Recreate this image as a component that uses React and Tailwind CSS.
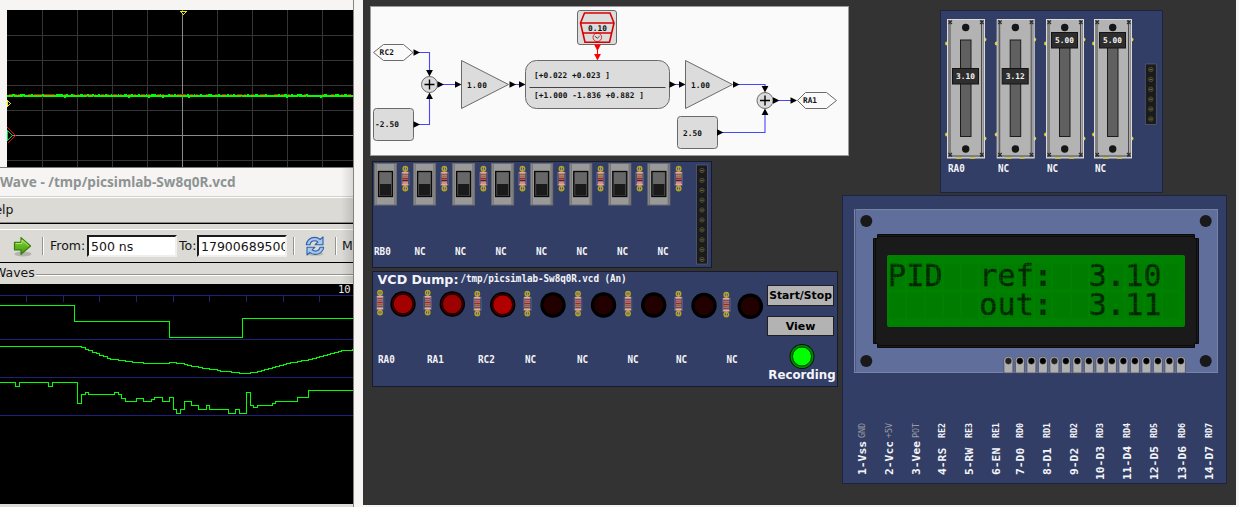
import React from "react";

const MONO = "font-['DejaVu_Sans_Mono',monospace]";
const LABEL = "font-['DejaVu_Sans_Mono',monospace] font-bold text-[9.3px] leading-[10px] whitespace-pre text-[#f4f4f8]";

/* Turns [x, level] pairs into a square-edged trace; units are thirds of a pixel. */
function steps(data, offset, end) {
  const px = (v) => Math.floor(v / 3) + 0.5;
  let d = "";
  data.forEach(([x, y], i) => {
    const yy = px(y) + offset;
    d += i === 0 ? `M0 ${yy}` : `H${px(x)}V${yy}`;
  });
  return d + `H${end}`;
}

const ANALOG_1 = [[0, 49], [245, 52], [257, 58], [266, 61], [278, 67], [290, 70], [299, 76], [311, 79], [323, 85], [332, 88], [356, 91], [377, 94], [398, 97], [431, 100], [509, 97], [530, 100], [554, 103], [563, 106], [575, 109], [596, 112], [608, 115], [629, 118], [653, 121], [662, 124], [695, 127], [719, 130], [752, 127], [773, 124], [785, 121], [794, 118], [806, 115], [818, 112], [827, 109], [839, 106], [851, 103], [860, 100], [872, 97], [893, 94], [905, 91], [926, 88], [938, 85], [950, 82], [959, 79], [971, 76], [983, 73], [992, 70], [1004, 67], [1016, 64], [1025, 61], [1057, 58]];
const ANALOG_2 = [[0, 157], [47, 169], [59, 157], [146, 169], [158, 157], [233, 220], [245, 193], [257, 187], [266, 193], [344, 187], [356, 193], [365, 205], [377, 214], [410, 205], [431, 214], [455, 208], [464, 202], [488, 214], [509, 202], [521, 238], [530, 250], [542, 238], [554, 214], [575, 226], [596, 238], [620, 226], [629, 238], [686, 250], [707, 238], [719, 250], [740, 187], [752, 226], [761, 232], [773, 226], [818, 220], [827, 214], [893, 202], [926, 181]];

const RED_NOISE = [[9, 4], [14, 3], [18, 2], [28, 3], [34, 8], [44, 11], [64, 2], [73, 2], [77, 2], [84, 3], [89, 4], [95, 1], [101, 3], [107, 2], [113, 4], [120, 2], [128, 3], [134, 2], [141, 4], [148, 2], [157, 3], [162, 2], [170, 3], [177, 9], [190, 3], [196, 2], [206, 3], [215, 2], [222, 4], [230, 2], [237, 5], [244, 2], [251, 3], [260, 5], [274, 4], [281, 3], [288, 2], [299, 2], [304, 2], [322, 2], [331, 3], [341, 2], [348, 3]];
const GREEN_NOISE = [[12, 3], [20, 5], [31, 2], [42, 2], [56, 7], [66, 2], [71, 2], [80, 3], [87, 2], [92, 2], [98, 2], [105, 2], [111, 1], [118, 1], [124, 3], [131, 2], [138, 2], [146, 1], [151, 5], [160, 1], [168, 2], [174, 2], [187, 2], [194, 1], [200, 2], [208, 4], [218, 2], [227, 2], [233, 2], [247, 2], [255, 3], [265, 2], [278, 2], [284, 3], [291, 2], [297, 5], [306, 2], [324, 3], [335, 4], [344, 3]];

function Scope() {
  return (
    <svg className="ml-[7px] mt-[10px] block h-[157px] w-[346px]" viewBox="7 10 346 157" shapeRendering="crispEdges">
      <rect x="7" y="10" width="346" height="157" fill="#000" />
      {[42, 77, 112, 147, 217, 252, 287, 322].map((x) => <rect key={x} x={x} y="10" width="1" height="157" fill="#343434" />)}
      {[35, 60, 85, 110, 160].map((y) => <rect key={y} x="7" y={y} width="346" height="1" fill="#343434" />)}
      <rect x="182" y="10" width="1" height="157" fill="#8a8a8a" />
      <rect x="7" y="135" width="346" height="1" fill="#8a8a8a" />
      {RED_NOISE.map(([x, w]) => <rect key={x} x={x} y="94" width={w} height="1" fill="#f00" />)}
      {GREEN_NOISE.map(([x, w]) => <rect key={x} x={x} y="94" width={w} height="1" fill="#0f0" />)}
      <rect x="7" y="95" width="346" height="2" fill="#0f0" />
      {[64, 128, 148, 162, 188, 286, 320].map((x) => <rect key={x} x={x} y="97" width="2" height="1" fill="#0f0" />)}
      {[13, 23, 42, 87, 93, 241, 298, 306].map((x) => <rect key={x} x={x} y="96" width="1" height="1" fill="#c03000" />)}
      <path d="M180.5 11.5h6l-3 3z" fill="#000" stroke="#eeee00" />
      <path d="M7.5 100.5l3 3l-3 3z" fill="#000" stroke="#eeee00" />
      <path d="M7.5 127.5l8 8l-8 8" fill="none" stroke="#f00" />
      <path d="M7.5 130.5l5 5l-5 5z" fill="#000" stroke="#00e040" />
    </svg>
  );
}

function ArrowIcon() {
  return (
    <svg className="h-[22px] w-[20px] shrink-0" viewBox="0 0 20 22">
      <defs>
        <linearGradient id="ga" x1="0" y1="0" x2="0" y2="1"><stop offset="0" stopColor="#8fe04a" /><stop offset=".5" stopColor="#62b822" /><stop offset="1" stopColor="#4a9a10" /></linearGradient>
      </defs>
      <ellipse cx="10" cy="18" rx="8.5" ry="2.6" fill="#000" opacity=".18" />
      <path d="M1.5 6.300H8V1.600L17.500 10L8 18.300V13.800H1.500Z" fill="url(#ga)" stroke="#3a7d0a" strokeWidth="1.200" strokeLinejoin="round" />
      <path d="M2.600 7.400H9V4L15.800 10" fill="none" stroke="#b4f07c" strokeWidth=".9" />
    </svg>
  );
}

function RefreshIcon() {
  return (
    <svg className="h-[20px] w-[20px] shrink-0" viewBox="0 0 20 20">
      <ellipse cx="10" cy="18" rx="8.5" ry="1.8" fill="#000" opacity=".15" />
      <g fill="#a9c8ee" stroke="#2d62a8" strokeWidth="1.1" strokeLinejoin="round">
        <path d="M1.3 8.8C1.7 4.6 5.2 1.4 9.6 1.4C11.8 1.4 13.7 2.2 15.2 3.5L18 .9V8.8H10L12.8 6C12 5.2 10.9 4.8 9.6 4.8C7.3 4.8 5.4 6.4 5 8.8Z" />
        <path d="M18.7 11.2C18.3 15.4 14.8 18.4 10.4 18.4C8.2 18.4 6.3 17.7 4.8 16.4L2 19V11.2H10L7.2 13.9C8 14.7 9.1 15.1 10.4 15.1C12.7 15.1 14.6 13.6 15 11.2Z" />
      </g>
    </svg>
  );
}

function Sep() {
  return <div className="h-[18px] w-[2px] shrink-0 border-l border-[#96948f] bg-white" />;
}

function Entry({ children }) {
  return (
    <div className="h-[22px] w-[90px] shrink-0 overflow-hidden border-2 border-t-[#1c1c1c] border-l-[#1c1c1c] border-r-[#f0efec] border-b-[#f0efec] bg-white pl-[2px] text-[12.5px] leading-[19px] whitespace-nowrap">
      {children}
    </div>
  );
}

function WaveWindow() {
  return (
    <div className="relative flex h-[340px] flex-col border-t border-[#7c7a77] bg-[#dddbd7] font-['DejaVu_Sans',sans-serif] text-[12.5px] text-[#151515]">
      <div className="h-[28px] bg-[#f6f5f4] font-['Noto_Sans',sans-serif] text-[13.6px] leading-[28px] font-bold whitespace-nowrap text-[#8e9393]">
        Wave - /tmp/picsimlab-Sw8q0R.vcd
      </div>
      <div className="h-[2px] border-t border-[#d2d0cc] bg-white" />
      <div className="flex h-[25px] items-center border-b border-[#8a8884] bg-[#dbdad5]">
        <div className="-ml-[15px] whitespace-nowrap">Help</div>
      </div>
      <div className="h-[6px] border-t border-black bg-[#dbdad5]" />
      <div className="flex h-[33px] items-center border-t border-white bg-[#dbdad5]">
        <div className="ml-[13px] pt-[2px]"><ArrowIcon /></div>
        <div className="ml-[9px]"><Sep /></div>
        <div className="ml-[6px] w-[37px] whitespace-nowrap">From:</div>
        <Entry>500 ns</Entry>
        <div className="ml-[2px] w-[18px] whitespace-nowrap">To:</div>
        <Entry>17900689500</Entry>
        <div className="ml-[6px]"><Sep /></div>
        <div className="ml-[10px]"><RefreshIcon /></div>
        <div className="ml-[10px]"><Sep /></div>
        <div className="ml-[5px] w-[11px] overflow-hidden">M</div>
      </div>
      <div className="flex h-[22px] items-center overflow-hidden border-t border-black bg-[#dbdad5]">
        <div className="-ml-[6px] shrink-0 whitespace-nowrap">Waves</div>
        <div className="mt-[2px] ml-[1px] h-[2px] flex-1 border-t border-[#96948f] bg-white" />
      </div>
      <svg className="block h-[220px] w-[353px]" viewBox="0 284 353 220" shapeRendering="crispEdges">
        <rect x="0" y="284" width="353" height="220" fill="#000" />
        {[295, 339, 377, 415].map((y) => <rect key={y} x="0" y={y} width="353" height="1" fill="#20207c" />)}
        {[26, 63, 99, 136, 173, 209, 246, 283, 319].map((x) => <rect key={x} x={x} y="296" width="1" height="6" fill="#20207c" />)}
        <text x="338" y="293" fontSize="10.5" fill="#e8e8e8" fontFamily="DejaVu Sans Mono, monospace">10</text>
        <g fill="none" stroke="#0f0">
          <path d="M0 305.500H74.500V321.500H169.500V337.500H242.500V318.500H353" />
          <path d={steps(ANALOG_1, 330, 353)} />
          <path d={steps(ANALOG_2, 330, 353)} />
        </g>
      </svg>
      <div className="pointer-events-none absolute top-0 right-0 h-[115px] w-[12px] bg-linear-to-r from-transparent to-black/12" />
    </div>
  );
}

function Arrow({ x, y, dir = "r", c = "#000" }) {
  const d = { r: "M0 -3.2L6.5 0L0 3.2Z", d: "M-3.400 0L0 6.500L3.400 0Z", u: "M-3.400 0L0 -6.500L3.400 0Z" }[dir];
  return <path d={d} transform={`translate(${x} ${y})`} fill={c} />;
}

function Diagram() {
  return (
    <svg className="block h-[150px] w-[479px]" viewBox="370 6 479 150">
      <rect x="370.500" y="6.500" width="478" height="149" fill="#fafafa" stroke="#9a9a9a" />
      <g fill="none" stroke="#4646ff" strokeWidth="1.1">
        <path d="M419 52.500H429.500V72M419 124.500H429.500V98M443 84.500H456M515 84.500H520M675 84.500H680M738 84.500H765V87M722 132.500H765V114M779 100.500H791" />
      </g>
      <g fill="#dcdcdc" stroke="#6a6a6a">
        <path d="M373.500 52.500L383.500 44.500H403.500L413 52.500L403.500 60.500H383.500Z" fill="#fafafa" />
        <path d="M797.500 100.500L805.500 92.500H826.500L836.500 100.500L826.500 108.500H805.500Z" fill="#fafafa" />
        <circle cx="429.500" cy="84.500" r="8" />
        <circle cx="765" cy="100.500" r="8" />
        <path d="M461.500 60.500V108.500L508.500 84.500Z" />
        <path d="M685.500 60.500V108.500L732.500 84.500Z" />
        <rect x="525.500" y="60.500" width="144" height="48" rx="11" />
        <rect x="373.500" y="108.500" width="40" height="32" rx="3" />
        <rect x="677.500" y="116.500" width="40" height="32" rx="3" />
        <rect x="577.500" y="10.500" width="39" height="34" rx="2.500" />
      </g>
      <path d="M424.500 84.500H434.500M429.500 79.500V89.500M760 100.500H770M765 95.500V105.500" stroke="#000" strokeWidth="1.400" />
      <path d="M529.500 87.500H665.500" stroke="#444" />
      <Arrow x={413.500} y={52.500} /><Arrow x={413.500} y={124.500} />
      <Arrow x={429.500} y={70} dir="d" /><Arrow x={429.500} y={99} dir="u" />
      <Arrow x={437.500} y={84.500} /><Arrow x={455} y={84.500} />
      <Arrow x={509.500} y={84.500} /><Arrow x={519} y={84.500} />
      <Arrow x={669.500} y={84.500} /><Arrow x={679} y={84.500} />
      <Arrow x={733} y={84.500} /><Arrow x={765} y={86} dir="d" />
      <Arrow x={765} y={115} dir="u" /><Arrow x={717} y={132.500} />
      <Arrow x={773} y={100.500} /><Arrow x={790.500} y={100.500} />
      <Arrow x={597.500} y={44.500} dir="d" c="#f00" /><Arrow x={597.500} y={54} dir="d" c="#f00" />
      <path d="M597.500 48V56" stroke="#f00" />
      <g fill="none" stroke="#d80000" strokeWidth="1.600">
        <path d="M584.500 13H610L614 23L609.500 42.300H585L580.500 23Z" />
        <path d="M581 23H614M583 33H611.500" strokeWidth="1.300" />
        <circle cx="597.300" cy="37.300" r="4.300" strokeWidth=".8" />
      </g>
      <path d="M594.800 36.200L597.300 38.200L599.600 36.200" fill="none" stroke="#222" strokeWidth=".8" />
      <g fontFamily="DejaVu Sans Mono, monospace" fontWeight="bold" fontSize="7.800" fill="#111">
        <text x="379.500" y="55.300" textLength="14.500">RC2</text>
        <text x="803" y="103.300" textLength="14">RA1</text>
        <text x="588" y="31.300" textLength="19">0.10</text>
        <text x="467" y="88.300" textLength="20">1.00</text>
        <text x="691" y="88.300" textLength="19">1.00</text>
        <text x="375" y="127.300" textLength="24">-2.50</text>
        <text x="683" y="136.300" textLength="19">2.50</text>
        <text x="534" y="78" textLength="76">[+0.022 +0.023 ]</text>
        <text x="534" y="98.300" textLength="110">[+1.000 -1.836 +0.882 ]</text>
      </g>
    </svg>
  );
}

function Resistor({ x, y, flip }) {
  const bands = flip
    ? ["#e9a6a2", "#7a5050", "#8a6060", "#b02020", "#7a6a40", "#7a4a4a", "#e9a6a2"]
    : ["#e9a6a2", "#8a6a45", "#8a7a50", "#b02028", "#40282c", "#d08888", "#e9a6a2"];
  return (
    <g transform={`translate(${x} ${y})`}>
      <rect x="-.7" y="1" width="1.400" height="24" fill="#9a9a98" />
      <circle cx="0" cy="2.700" r="2.200" fill="none" stroke="#b3a51e" strokeWidth="1.500" />
      <circle cx="0" cy="22.500" r="2.200" fill="none" stroke="#b3a51e" strokeWidth="1.500" />
      <rect x="-2.800" y="6" width="5.600" height="13.500" fill="#c98f8f" />
      {bands.map((c, i) => <rect key={i} x={i === 0 || i === 6 ? -3.200 : -2.700} y={5.800 + i * 2} width={i === 0 || i === 6 ? 6.400 : 5.400} height="1.500" fill={c} />)}
      <rect x="-4.200" y="6" width=".7" height="14" fill="#6d7796" opacity=".7" />
      <rect x="3.500" y="6" width=".7" height="14" fill="#6d7796" opacity=".7" />
    </g>
  );
}

function Header({ x, y, n, h }) {
  return (
    <g>
      <rect x={x} y={y} width="11" height={h} fill="#1b1b1b" stroke="#59607a" strokeWidth=".7" />
      {Array.from({ length: n }, (_, i) => (
        <g key={i}>
          <circle cx={x + 5.500} cy={y + 5.500 + i * 9.890} r="2.200" fill="none" stroke="#4a4a48" />
          <rect x={x + 4} y={y + 5 + i * 9.890} width="3" height="1.200" fill="#6b6a10" />
        </g>
      ))}
    </g>
  );
}

const SWITCH_LABELS = ["RB0", "NC", "NC", "NC", "NC", "NC", "NC", "NC"];

function SwitchBoard() {
  return (
    <div className="flex h-[107px] w-[340px] border border-[#161b30] bg-[#323e66]">
      <div className="w-[321px]">
        <svg className="block h-[46px] w-[321px]" viewBox="373 162 321 46">
          {SWITCH_LABELS.map((_, i) => {
            const x = 374 + i * 39.050;
            return (
              <g key={i}>
                <rect x={x + 0.500} y="163.500" width="22" height="41.500" fill="#999" stroke="#6c6c70" />
                <rect x={x + 1.500} y="164" width="1.200" height="41" fill="#777" />
                <rect x={x + 20.300} y="164" width="1.200" height="41" fill="#707070" />
                <rect x={x + 4.500} y="171.500" width="14" height="25" fill="#555" stroke="#080808" strokeWidth="1.300" />
                <rect x={x + 5.700} y="172.500" width="11.600" height="11.500" fill="#676767" />
                <rect x={x + 6} y="184" width="11" height="11.500" fill="#1a1a1a" />
                <Resistor x={x + 31.300} y={166} />
              </g>
            );
          })}
        </svg>
        <div className={"flex pt-[39px] pl-[1px] " + LABEL}>
          {SWITCH_LABELS.map((t, i) => <div key={i} className="w-[40.5px] shrink-0 scale-y-[1.14]">{t}</div>)}
        </div>
      </div>
      <svg className="block h-[105px] w-[17px]" viewBox="694 162 17 105">
        <Header x={696.500} y={165} n={10} h={99} />
      </svg>
    </div>
  );
}

const LEDS = [
  [403, 304, "#a40000", "#3c0000"], [452.300, 304, "#9c0000", "#3c0000"], [502.700, 304.700, "#b00000", "#3c0000"],
  [553, 305, "#230000", "#000"], [603.500, 305, "#230000", "#000"], [653.700, 305, "#230000", "#000"],
  [704, 305.500, "#230000", "#000"], [750.300, 306.300, "#230000", "#000"],
];
const DUMP_RES = [[380, 290], [427.700, 290], [477.300, 291], [527.300, 291], [578, 291], [628, 291], [678.500, 291], [726.300, 292]];
const DUMP_LABELS = [["RA0", "w-[49px]"], ["RA1", "w-[51px]"], ["RC2", "w-[47px]"], ["NC", "w-[52px]"], ["NC", "w-[50.5px]"], ["NC", "w-[48.5px]"], ["NC", "w-[50.5px]"], ["NC", "w-[20px]"]];

function DumpBoard() {
  return (
    <div className="flex h-[116px] w-[466px] border border-[#161b30] bg-[#323e66]">
      <div className="w-[394px]">
        <div className="flex h-[15px] items-center pl-[4.5px] whitespace-pre text-[#f4f4f8]">
          <div className="w-[83px] shrink-0 font-['DejaVu_Sans',sans-serif] text-[12.7px] leading-[15px] font-bold">VCD Dump:</div>
          <div className={"scale-y-[1.14] pb-px tracking-[-0.06px] " + LABEL}>/tmp/picsimlab-Sw8q0R.vcd (An)</div>
        </div>
        <svg className="block h-[36px] w-[393px]" viewBox="373 287 393 36">
          {DUMP_RES.map(([x, y]) => <Resistor key={x} x={x} y={y} flip />)}
          {LEDS.map(([x, y, c, ring]) => (
            <g key={x}>
              <circle cx={x} cy={y} r="12.700" fill="#000" />
              <circle cx={x} cy={y} r="11.300" fill={ring} />
              <circle cx={x} cy={y} r="9.800" fill={c} stroke="#000" strokeWidth=".8" />
            </g>
          ))}
        </svg>
        <div className={"flex pt-[31.5px] pl-[5px] " + LABEL}>
          {DUMP_LABELS.map(([t, w], i) => <div key={i} className={w + " shrink-0 scale-y-[1.14]"}>{t}</div>)}
        </div>
      </div>
      <div className="flex flex-1 flex-col items-center pt-[13px] font-['DejaVu_Sans',sans-serif] font-bold">
        <button className="h-[21px] w-[67px] self-start border border-[#202020] bg-[#b3b3b3] text-[10.8px] leading-[18px] whitespace-nowrap text-black"><span className="-mx-2">Start/Stop</span></button>
        <button className="mt-[10px] h-[20px] w-[67px] self-start border border-[#202020] bg-[#b3b3b3] text-[11px] leading-[19px] text-black">View</button>
        <svg className="mt-[7px] block h-[26px] w-[26px] shrink-0" viewBox="-13 -13.500 26 26">
          <circle r="12.500" fill="#001800" />
          <circle r="11.500" fill="#008a00" />
          <circle r="9.500" fill="#0f0" stroke="#003c00" />
        </svg>
        <div className="text-[11.8px] leading-[12px] whitespace-nowrap text-[#f4f4f8]">Recording</div>
      </div>
    </div>
  );
}

const POTS = [[947, 68, "3.10"], [996.700, 68, "3.12"], [1046, 32, "5.00"], [1094, 32, "5.00"]];

function PotBoard() {
  return (
    <div className="flex h-[183px] w-[223px] flex-col border border-[#1c2444] bg-[#323e66]">
      <svg className="block h-[151px] w-[221px]" viewBox="941 11 221 151">
        {POTS.map(([x, ky, v]) => (
          <g key={x} transform={`translate(${x} 0)`}>
            <circle cx="0" cy="43.500" r="2" fill="#d8cc3a" /><circle cx="37.500" cy="39.500" r="2" fill="#d8cc3a" />
            <circle cx="0" cy="134.500" r="2" fill="#d8cc3a" /><circle cx="37.500" cy="138.500" r="2" fill="#d8cc3a" />
            <rect x=".5" y="19.500" width="37" height="138.500" fill="#b3b3b3" stroke="#dadada" />
            <path d="M3 20V157M34.500 20V157M1 156H37" stroke="#4c4c4c" fill="none" />
            <path d="M1.500 20V157M36.300 20V157" stroke="#777" fill="none" strokeWidth=".8" />
            <rect x="9" y="157" width="6" height="2" fill="#c8bf48" /><rect x="23" y="157" width="5" height="2" fill="#c8bf48" />
            <path d="M1.500 20.500L5 24M5 20.500L1.500 24M33 20.500L36.500 24M36.500 20.500L33 24M1.500 153L5 156.500M5 153L1.500 156.500M33 153L36.500 156.500M36.500 153L33 156.500" stroke="#2a2a2a" strokeWidth="1.100" />
            <rect x="13.500" y="40" width="10.500" height="96.500" fill="#606060" stroke="#1c1c1c" />
            <circle cx="18.700" cy="27.500" r="3.700" fill="#161616" />
            <circle cx="18.700" cy="149" r="3.700" fill="#161616" />
            <rect x="5.500" y={ky + 0.500} width="26" height="15.500" fill="#2e2e2e" stroke="#141414" />
            <text x="9" y={ky + 11} textLength="19" fontSize="7.800" fontWeight="bold" fill="#f4f4f4" fontFamily="DejaVu Sans Mono, monospace">{v}</text>
          </g>
        ))}
        <Header x={1145.300} y={64} n={6} h={60.500} />
      </svg>
      <div className={"flex pt-[2px] pl-[7px] " + LABEL}>
        <div className="w-[50px] scale-y-[1.14]">RA0</div><div className="w-[49px] scale-y-[1.14]">NC</div><div className="w-[48px] scale-y-[1.14]">NC</div><div className="scale-y-[1.14]">NC</div>
      </div>
    </div>
  );
}

const LCD_ROWS = ["PID  ref:  3.10 ", "     out:  3.11 "];
const LCD_PINS = [
  ["GND", "1-Vss", "w-[27px]", 1], ["+5V", "2-Vcc", "w-[27px]", 1], ["POT", "3-Vee", "w-[26px]", 1], ["RE2", "4-RS", "w-[27px]"],
  ["RE3", "5-RW", "w-[27px]"], ["RE1", "6-EN", "w-[24px]"], ["RD0", "7-D0", "w-[27px]"], ["RD1", "8-D1", "w-[27px]"],
  ["RD2", "9-D2", "w-[26px]"], ["RD3", "10-D3", "w-[27px]"], ["RD4", "11-D4", "w-[27px]"], ["RD5", "12-D5", "w-[28px]"],
  ["RD6", "13-D6", "w-[27px]"], ["RD7", "14-D7", "w-[14px]"],
];

function LcdBoard() {
  return (
    <div className="flex h-[289px] w-[385px] flex-col border border-[#1c2444] bg-[#323e66]">
      <div className="relative mt-[13px] ml-[11px] h-[165px] w-[365px]">
        <svg className="absolute inset-0 h-[165px] w-[365px]" viewBox="854 209 365 165">
          <rect x="854.500" y="209.500" width="363" height="163" fill="#606e9b" stroke="#7884a6" />
          <path d="M855.500 209V372" stroke="#4c587e" />
          {[[866.300, 221], [1205.700, 221], [866.300, 361], [1205.700, 361]].map(([x, y]) => <circle key={x + "-" + y} cx={x} cy={y} r="6" fill="#191919" />)}
          <path d="M877.500 234.500H1194.500V238.500H1198.500V343.500H1194.500V347.500H877.500V343.500H873.500V238.500H877.500Z" fill="#1a1a1a" stroke="#0a0a0a" />
          <path d="M877 236.500H1195M877 345.500H1195M875.500 239V343M1196.500 239V343" stroke="#0c0c0c" />
          {Array.from({ length: 16 }, (_, i) => {
            const x = 1008.400 + i * 11.500;
            return (
              <g key={i}>
                <path d={`M${x - 4.500} 373V361a4.500 4.500 0 0 1 9 0V373Z`} fill="#b0b0b0" stroke="#4a4f60" strokeWidth=".8" />
                <circle cx={x} cy="361" r="3.400" fill={i === 0 || i === 4 ? "#222" : "#000"} stroke="#555" strokeWidth=".8" />
                <circle cx={x} cy="361" r="3.900" fill="none" stroke="#c4c4c4" strokeWidth=".6" />
              </g>
            );
          })}
        </svg>
        <div className={"absolute top-[46px] left-[33px] h-[72px] w-[298px] overflow-hidden rounded-[2px] bg-[#008100] pt-[9px] pl-[2px] text-[30px] text-[#012801] " + MONO}>
          {LCD_ROWS.map((row, r) => (
            <div key={r} className="flex h-[28.5px] leading-[23px]">
              {row.split("").map((ch, i) => (
                <div key={i} className={"mr-[2px] flex h-[25px] w-[16.25px] shrink-0 justify-center bg-[#007d00] whitespace-pre " + (ch === "." || ch === ":" ? "font-bold" : "[-webkit-text-stroke:0.4px_#012801]")}>{ch}</div>
              ))}
            </div>
          ))}
          <div className="absolute inset-0 bg-[repeating-linear-gradient(to_right,transparent_0_2.65px,rgba(0,125,0,0.3)_2.65px_3.25px),repeating-linear-gradient(to_bottom,transparent_0_2.65px,rgba(0,125,0,0.3)_2.65px_3.25px)]" />
        </div>
      </div>
      <div className="mt-[48px] flex pl-[13px] whitespace-pre text-[#f4f4f8]">
        {LCD_PINS.map(([sig, name, w, fixed], i) => (
          <div key={i} className={w + " shrink-0 " + MONO}>
            <div className="flex w-[13px] flex-col items-center">
              <div className={"flex h-[17px] w-[13px] items-end justify-center text-[8.4px] leading-[13px] [writing-mode:vertical-rl] rotate-180 scale-x-110 " + (fixed ? "text-[#9a9ca4]" : "font-bold")}>{sig}</div>
              <div className={(i > 8 ? "h-[41px]" : "h-[36px]") + " w-[13px] text-[11.3px] leading-[13px] font-bold [writing-mode:vertical-rl] rotate-180"}>{name}</div>
            </div>
          </div>
        ))}
      </div>
    </div>
  );
}

export default function App() {
  return (
    <div className="flex h-[507px] w-[1239px] overflow-hidden bg-[#f6f5f4]">
      <div className="w-[354px] shrink-0 border-r border-[#85827f] bg-[#f6f5f4]">
        <Scope />
        <WaveWindow />
      </div>
      <div className="ml-[9px] flex h-[505px] w-[873px] shrink-0 bg-[#333]">
        <div className="w-[479px] pt-[6px]">
          <div className="ml-[7px]"><Diagram /></div>
          <div className="mt-[5px] ml-[9px]"><SwitchBoard /></div>
          <div className="mt-[3px] ml-[9px]"><DumpBoard /></div>
        </div>
        <div className="pt-[10px]">
          <div className="ml-[98px]"><PotBoard /></div>
          <div className="mt-[2px]"><LcdBoard /></div>
        </div>
      </div>
    </div>
  );
}
